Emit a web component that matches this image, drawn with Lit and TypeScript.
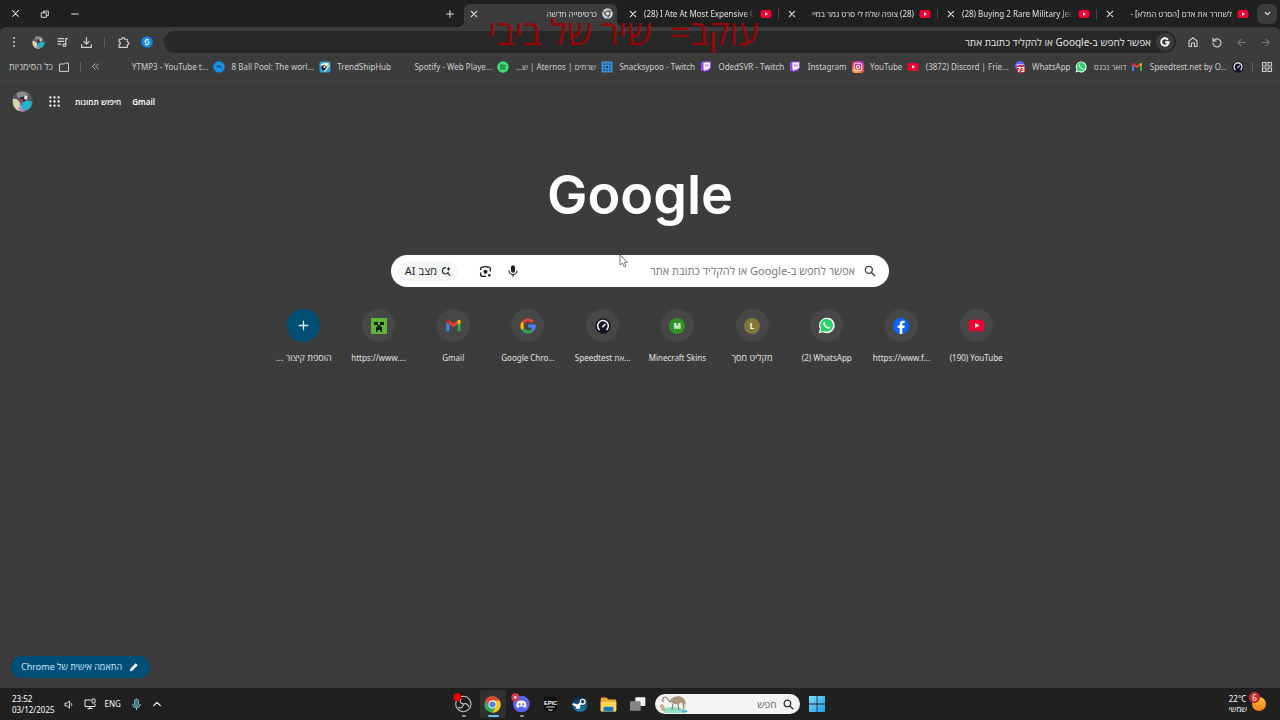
import { LitElement, html, css, svg, TemplateResult } from "lit";
import { customElement } from "lit/decorators.js";
import { classMap } from "lit/directives/class-map.js";

type Glyph = TemplateResult;

const icon = (size: number, viewBox: string, body: Glyph) =>
  html`<svg class="icon" width=${size} height=${size} viewBox=${viewBox} aria-hidden="true">${body}</svg>`;

const line = (size: number, d: string, width = 1.8) =>
  icon(size, "0 0 24 24", svg`<path d=${d} fill="none" stroke="currentColor" stroke-width=${width} stroke-linecap="round" stroke-linejoin="round"/>`);

const closeIcon = () => line(8, "M4 4l16 16M20 4L4 20", 3.5);
const youtube = (size = 12) => icon(size, "0 0 24 24", svg`
  <rect x="1" y="4" width="22" height="16" rx="4.500" fill="#f00033"/><path d="M10 8.500v7l6-3.500z" fill="#fff"/>`);
const twitch = () => icon(12, "0 0 24 24", svg`
  <path d="M5 1h17v13l-6 6h-4l-4 4v-4H2V5z" fill="#9146ff"/><path d="M7 3h13v10l-4 4h-4l-3 3v-3H7z" fill="#fff"/>
  <path d="M11.500 6.500v5M16 6.500v5" stroke="#9146ff" stroke-width="2"/>`);
const gmail = (size: number) => icon(size, "0 0 24 24", svg`
  <path d="M2 20V6l4 3v11z" fill="#4285f4"/><path d="M18 20V9l4-3v14z" fill="#34a853"/>
  <path d="M2 6.500C2 3.500 4.500 3.500 6 4.700L12 9.500l6-4.800v5L12 14.500 6 9.800 2 7z" fill="#ea4335"/>
  <path d="M18 4.700c2-1.500 4-.7 4 1.800V8l-4 3z" fill="#fbbc04"/><path d="M2 6.500C2 4 4 3.500 6 4.700V10L2 7.500z" fill="#c5221f"/>`);
const whatsapp = (size: number) => icon(size, "0 0 24 24", svg`
  <path d="M1 23l1.700-6A11 11 0 1 1 7 21.500z" fill="#fff"/><path d="M3.300 20.700l1.200-4.300a9 9 0 1 1 3.300 3.200z" fill="#25d366"/>
  <path d="M8.300 7c-2 2-.5 5 1.700 7.200s5.500 3.700 7 1.500c.7-1-.2-1.400-2.300-2.400-1 .8-1.200 1.600-3-.1s-1.700-2.200-.8-3.200C10.300 8 9.800 6 8.300 7z" fill="#fff"/>`);
const speedtest = (size: number) => icon(size, "0 0 24 24", svg`
  <circle cx="12" cy="12" r="11.500" fill="#141526"/>
  <path d="M7 18a8 8 0 1 1 10 0" fill="none" stroke="#fff" stroke-width="2.200"/><path d="M11 14l4.500-5" stroke="#fff" stroke-width="2.200"/>`);
const googleG = (size: number) => icon(size, "0 0 24 24", svg`
  <g fill="none" stroke-width="4.400"><path d="M19.300 6.200A9.300 9.300 0 0 0 4 7.500" stroke="#ea4335"/>
  <path d="M4.200 7.200a9.300 9.300 0 0 0 0 9.600" stroke="#fbbc05"/><path d="M4 16.500a9.300 9.300 0 0 0 14.300 2.300" stroke="#34a853"/>
  <path d="M12.300 12h9c0 3-1.200 5.300-3.200 7" stroke="#4285f4"/></g>`);
const chrome = (size: number) => icon(size, "0 0 24 24", svg`
  <circle cx="12" cy="12" r="11.500" fill="#34a853"/>
  <path d="M2 6.200A11.500 11.500 0 0 1 22 6.300H12z" fill="#ea4335"/><path d="M2 6.200L7.400 15 12 6.300z" fill="#ea4335"/>
  <path d="M22 6.300A11.500 11.500 0 0 1 11.800 23.500L17 14.800 12 6.300z" fill="#fbc116"/>
  <circle cx="12" cy="12" r="5.700" fill="#fff"/><circle cx="12" cy="12" r="4.400" fill="#4285f4"/>`);
const chromeMono = () => icon(11, "0 0 24 24", svg`
  <circle cx="12" cy="12" r="11.500" fill="#d0d2d1"/>
  <circle cx="12" cy="12" r="5.500" fill="none" stroke="#3c3c3c" stroke-width="2"/>
  <path d="M12 6.500h10M7.500 15L2.500 6.500M16.500 15L12 23" stroke="#3c3c3c" stroke-width="1.800"/>`);
const spotify = () => icon(12, "0 0 24 24", svg`
  <circle cx="12" cy="12" r="11.500" fill="#3be477"/>
  <path d="M6 8.700c4-1.200 8.500-.8 12 1M6.500 12.400c3.500-1 7-.6 10 1M7 16c3-.8 5.500-.5 8 .8" fill="none" stroke="#1b4a2c" stroke-width="1.900" stroke-linecap="round"/>`);
const instagram = () => html`<span class="insta">${icon(10, "0 0 24 24", svg`
  <g fill="none" stroke="#fff" stroke-width="2.400"><rect x="3" y="3" width="18" height="18" rx="5"/><circle cx="12" cy="12" r="4"/></g>`)}</span>`;
const discordFace = svg`<path d="M6.500 8c3.500-1.700 7.500-1.700 11 0 1.500 2.500 2.200 5 2 8-1.200.9-2.400 1.300-3.600 1.500l-1-1.600h-5.800l-1 1.600c-1.200-.2-2.400-.6-3.600-1.500-.2-3 .5-5.500 2-8z" fill="#fff"/>
  <circle cx="9.300" cy="12.600" r="1.600" fill="#5865f2"/><circle cx="14.700" cy="12.600" r="1.600" fill="#5865f2"/>`;
const discordBadge = () => icon(12, "0 0 24 24", svg`
  <circle cx="12" cy="10" r="10" fill="#5865f2"/><path d="M5 6h14v3H5z" fill="#b9c0ff"/><circle cx="14" cy="16" r="8.500" fill="#d8303a"/>
  <text x="14" y="21" text-anchor="middle" font-size="13" font-weight="700" fill="#fff" font-family="Open Sans, sans-serif">73</text>`);
const aternos = () => icon(12, "0 0 24 24", svg`
  <rect x="1" y="1" width="22" height="22" fill="#3d8fd1"/>
  <path d="M5 5h3v3H5zM16 5h3v3h-3zM5 16h3v3H5zM16 16h3v3h-3zM10 10h4v4h-4zM11 4h2v3h-2zM11 17h2v3h-2zM4 11h3v2H4zM17 11h3v2h-3z" fill="#123a63"/>`);
const pool = () => icon(12, "0 0 24 24", svg`
  <rect x="1" y="1" width="22" height="22" rx="4" fill="#2ea3d8"/><path d="M2 9c4-6 12-7 18-4l-3 5z" fill="#f4f1df"/>
  <circle cx="10" cy="13.500" r="5" fill="#161b22"/><circle cx="11" cy="12" r="2.200" fill="#fff"/><path d="M11 21L21 8" stroke="#f0d9a4" stroke-width="3"/>`);
const ytmp3 = () => icon(12, "0 0 24 24", svg`
  <circle cx="12" cy="12" r="11.500" fill="#1790e6"/><path d="M8 12c2-3 4-2 5-1l3 2" fill="none" stroke="#0c2f4e" stroke-width="2.200"/>`);
const shazam = () => icon(12, "0 0 24 24", svg`
  <circle cx="12" cy="12" r="11.500" fill="#1287f0"/>
  <path d="M14.500 7.500c-2-1.500-3.500-.8-5 .8-2.300 2.200-1.500 4 .5 5.500M9.500 16.500c2 1.500 3.500.8 5-.8 2.300-2.200 1.500-4-.5-5.500" fill="none" stroke="#fff" stroke-width="2.300" stroke-linecap="round"/>`);
const avatar = (size: number) => icon(size, "0 0 24 24", svg`
  <circle cx="12" cy="12" r="12" fill="#55585b"/><path d="M5 3c4-4 11-3 14 1l-3 5-9-1z" fill="#85898c"/>
  <path d="M1 9c3-1 6 1 8 4l2 10C5 23 0 18 1 9z" fill="#d9d2ae"/><path d="M7 20l4-4 4 7c-3 1-6 1-8-3z" fill="#b28cc4"/>
  <path d="M11 13c4-3 9-3 12 0-1 5-4 9-8 9-3-1-5-4-4-9z" fill="#21b3c9"/><path d="M9 7l6-1 1 5-5 2z" fill="#2b2b31"/>
  <path d="M14 5l4 1-1 4-3-1z" fill="#e7e4e4"/><path d="M10 9l3 1-1 4-2-1z" fill="#c03350"/>`);
const searchIcon = (size: number, width = 2.4) => line(size, "M10 4a6 6 0 1 0 0 12 6 6 0 0 0 0-12zM14.500 14.500L20 20", width);
const creeper = () => icon(16, "0 0 16 16", svg`
  <rect width="16" height="16" fill="#5fb53a"/><path d="M3 4h4v3H3zM9 4h4v3H9zM6.500 7h3v2h1.500v5H9.500v-2h-3v2H5V9h1.500z" fill="#111d0c"/>`);
const facebook = () => icon(16, "0 0 24 24", svg`
  <circle cx="12" cy="12" r="12" fill="#0866ff"/>
  <path d="M10 24v-9H7v-3.700h3V9c0-3.300 2-5 5-5l2.500.2v3.300H16c-1.500 0-2 .8-2 2v1.800h3.500L17 15h-3v9z" fill="#fff"/>`);
const letter = (ch: string, kind: string) => html`<span class="letter ${kind}">${ch}</span>`;

interface Tab { title: string; rtl: boolean; active?: boolean; }
const TABS: Tab[] = [
  { title: "לשחרר את אדם [הסרט המלא] -", rtl: true },
  { title: "(28) Buying 2 Rare Military Jeep", rtl: false },
  { title: "(28) צופה שלח לי סרט גמר במיי", rtl: true },
  { title: "(28) I Ate At Most Expensive Gr", rtl: false },
  { title: "כרטיסייה חדשה", rtl: true, active: true },
];

interface Bookmark { label: string; glyph: () => unknown; rtl?: boolean; }
const BOOKMARKS: Bookmark[] = [
  { label: "Speedtest.net by O...", glyph: () => speedtest(12) },
  { label: "דואר נכנס", glyph: () => gmail(12), rtl: true },
  { label: "WhatsApp", glyph: () => whatsapp(12) },
  { label: "(3872) Discord | Frie...", glyph: discordBadge },
  { label: "YouTube", glyph: () => youtube(12) },
  { label: "Instagram", glyph: instagram },
  { label: "OdedSVR - Twitch", glyph: twitch },
  { label: "Snacksypoo - Twitch", glyph: twitch },
  { label: "שרתים | Aternos | ש...", glyph: aternos, rtl: true },
  { label: "Spotify - Web Playe...", glyph: spotify },
  { label: "TrendShipHub", glyph: () => html`<span class="blank"></span>` },
  { label: "8 Ball Pool: The worl...", glyph: pool },
  { label: "YTMP3 - YouTube t...", glyph: ytmp3 },
];

interface Tile { label: string; glyph: () => unknown; rtl?: boolean; }
const TILES: Tile[] = [
  { label: "(190) YouTube", glyph: () => youtube(17) },
  { label: "https://www.f...", glyph: facebook },
  { label: "(2) WhatsApp", glyph: () => whatsapp(17) },
  { label: "מקליט מסך", glyph: () => letter("L", "olive"), rtl: true },
  { label: "Minecraft Skins", glyph: () => letter("M", "green") },
  { label: "Speedtest את...", glyph: () => speedtest(16) },
  { label: "Google Chro...", glyph: () => googleG(16) },
  { label: "Gmail", glyph: () => gmail(17) },
  { label: "https://www....", glyph: creeper },
];

@customElement("app-root")
export class AppRoot extends LitElement {
  static styles = css`
    :host {
      display: flex; flex-direction: column; position: relative;
      min-height: 100vh; overflow: hidden; direction: rtl;
      background: #3c3c3c; color: #e3e3e3;
      font: 8px/12px "Noto Sans", "Open Sans", "DejaVu Sans", sans-serif;
    }
    * { box-sizing: border-box; }
    button, input { font: inherit; color: inherit; background: none; border: 0; padding: 0; margin: 0; outline: 0; }
    button { display: grid; place-items: center; }
    a { color: inherit; text-decoration: none; }
    .icon { display: block; flex: none; overflow: visible; }
    .ltr { direction: ltr; }
    .rtl { direction: rtl; }

    .strip { display: flex; align-items: center; height: 27px; background: #1f2020; padding-right: 3px; }
    .menu { width: 20px; height: 20px; border-radius: 6px; background: #3a3b3b; margin-left: 4px; }
    .tabs { display: flex; gap: 6px; align-self: stretch; padding-top: 4px; }
    .tab { position: relative; display: flex; align-items: center; gap: 5px; width: 153px; padding: 0 4px 4px; }
    .tab:not(.active)::after { content: ""; position: absolute; left: -4px; top: 5px; width: 1px; height: 10px; background: #46484a; }
    .tab:nth-last-child(2)::after { display: none; }
    .tab.active { background: #3c3c3c; border-radius: 6px 6px 0 0; }
    .tab.active::before, .tab.active::after {
      content: ""; position: absolute; bottom: 0; width: 6px; height: 6px;
    }
    .tab.active::before { right: -6px; background: radial-gradient(circle at 100% 0, transparent 6px, #3c3c3c 6px); }
    .tab.active::after { left: -6px; background: radial-gradient(circle at 0 0, transparent 6px, #3c3c3c 6px); }
    .title { flex: 1; overflow: hidden; white-space: nowrap; }
    .title.ltr { mask-image: linear-gradient(to left, transparent, #000 12px); }
    .title.rtl { mask-image: linear-gradient(to right, transparent, #000 12px); }
    .close { width: 12px; height: 12px; }
    .new { width: 20px; height: 20px; margin-right: 4px; }
    .controls { display: flex; margin-right: auto; }
    .controls button { width: 30px; height: 27px; }

    .frame { background: #1f2020; }
    .toolbar { display: flex; align-items: center; padding: 4px 3px 2px 2px; background: #3c3c3c; border-radius: 6px 6px 0 0; }
    .toolbar button { width: 24px; height: 22px; color: #d0d0d0; }
    .toolbar .off { color: #7c7c7c; }
    .omni { flex: 1; display: flex; align-items: center; gap: 5px; height: 22px; margin: 0 5px; padding-right: 2px; border-radius: 11px; background: #282828; }
    .omni input { flex: 1; min-width: 0; font-size: 10px; }
    .omni input::placeholder { color: #e6e6e6; opacity: 1; }
    .g { display: grid; place-items: center; width: 18px; height: 18px; border-radius: 50%; background: #3c3c3c; color: #fff; }
    .rule { width: 1px; height: 10px; margin: 0 6px; background: #5d5f61; }

    .marks { display: flex; align-items: center; height: 27px; padding: 0 7px 3px 9px; border-bottom: 1px solid #454545; color: #cfcfcf; }
    .list { flex: 1; display: flex; justify-content: space-between; align-items: center; padding: 0 4px 0 32px; min-width: 0; }
    .list a, .all { display: flex; align-items: center; gap: 5px; white-space: nowrap; }
    .all { margin-right: 4px; font-size: 9px; }
    .more { margin-left: 4px; }
    .apps-rule { margin-right: 8px; }
    .blank { width: 12px; height: 12px; }
    .insta { display: grid; place-items: center; width: 12px; height: 12px; border-radius: 3px; background: linear-gradient(20deg, #ffc03a, #f5384f 45%, #b02fd0); }

    main { flex: 1; display: flex; flex-direction: column; align-items: center; }
    .links { display: flex; align-self: stretch; justify-content: flex-end; align-items: center; gap: 11px; height: 39px; padding-left: 12px; color: #fff; font-weight: 600; }
    .links .apps { width: 20px; height: 20px; }
    .logo { direction: ltr; margin: 38px 0 0; height: 96px; font: 600 54px/72px Inter, sans-serif; color: #fff; }
    .search { display: flex; align-items: center; width: 38%; min-width: 498px; height: 32px; padding: 0 12px 0 7px; border-radius: 16px; background: #fff; color: #474747; }
    .search input { flex: 1; min-width: 0; margin: 0 8px; font-size: 11px; line-height: 16px; }
    .search input::placeholder { color: #757575; opacity: 1; }
    .search button { width: 27px; height: 20px; color: #1f1f1f; }
    .search .ai { display: flex; justify-content: center; align-items: center; gap: 4px; width: 60px; margin-right: 14px; border-radius: 10px; background: #f5f6f6; font-size: 11px; }
    .tiles { display: grid; grid-template-columns: repeat(10, 1fr); width: 58%; min-width: 747px; margin: 22px 0 0; padding: 0; list-style: none; }
    .tiles a, .tiles button { display: grid; justify-items: center; gap: 9px; width: 100%; line-height: 13px; white-space: nowrap; }
    .tiles .rtl { font-size: 9px; }
    .disc { display: grid; place-items: center; width: 33px; height: 33px; border-radius: 50%; background: #474747; }
    .add { background: #004f77; color: #d7ecfa; }
    .letter { width: 16px; height: 16px; border-radius: 50%; color: #fff; font-weight: 700; line-height: 16px; text-align: center; }
    .green { background: #2f9423; }
    .olive { background: #7d7838; }
    .custom { display: flex; align-items: center; gap: 7px; align-self: flex-end; height: 22px; margin: auto 0 10px 11px; padding: 0 11px 0 10px; border-radius: 11px; background: #004f77; color: #c9e8fb; font-size: 9px; }

    footer { display: grid; grid-template-columns: 1fr auto 1fr; align-items: center; height: 32px; background: #202020; color: #fff; }
    .weather { display: flex; align-items: center; gap: 4px; padding-right: 13px; text-align: left; line-height: 10px; }
    .sun { position: relative; width: 16px; height: 18px; }
    .sun .badge { position: absolute; right: 7px; top: -3px; width: 11px; height: 11px; border-radius: 50%; background: #c42b2b; text-align: center; line-height: 11px; }
    .dock { display: flex; align-items: center; gap: 3px; }
    .dock button { position: relative; width: 26px; height: 28px; border-radius: 3px; }
    .dock .on { background: #303030; }
    .dock .run::after { content: ""; position: absolute; bottom: 1px; left: 11px; width: 4px; height: 2px; border-radius: 1px; background: #9a9a9a; }
    .dock .on::after { left: 8px; width: 11px; background: #5fc3f2; }
    .find { display: flex; align-items: center; gap: 5px; width: 145px; height: 20px; margin: 0 1px; padding: 0 5px 0 4px; border-radius: 10px; background: #f3f3f3; color: #2b2b2b; }
    .find input { flex: 1; min-width: 0; font-size: 10px; }
    .find input::placeholder { color: #6b6b6b; opacity: 1; }
    .tray { display: flex; justify-content: flex-end; align-items: center; gap: 9px; padding-left: 12px; }
    .tray time { direction: ltr; text-align: left; line-height: 11px; }

    .caption { position: absolute; top: 12px; left: 488px; margin: 0; font: 500 35px/40px "Open Sans", sans-serif; color: #980509; white-space: pre; pointer-events: none; }
    .pointer { position: absolute; left: 619px; top: 254px; pointer-events: none; }
  `;

  private tab(t: Tab) {
    return html`<div class=${classMap({ tab: true, active: !!t.active })} role="tab" aria-selected=${t.active ? "true" : "false"}>
      ${t.active ? chromeMono() : youtube()}
      <span class="title ${t.rtl ? "rtl" : "ltr"}">${t.title}</span>
      <button class="close" aria-label="סגירה">${closeIcon()}</button>
    </div>`;
  }

  render() {
    return html`
      <div class="strip">
        <button class="menu" aria-label="חיפוש כרטיסיות">${line(9, "M6 9l6 6 6-6", 3.5)}</button>
        <div class="tabs" role="tablist">${TABS.map((t) => this.tab(t))}</div>
        <button class="new" aria-label="כרטיסייה חדשה">${line(10, "M12 4v16M4 12h16", 2.4)}</button>
        <div class="controls">
          <button aria-label="מזעור">${line(10, "M4 12h16", 2.4)}</button>
          <button aria-label="שחזור">${line(10, "M4 9h11v11H4zM8 9V5h12v11h-4", 2.2)}</button>
          <button aria-label="סגירת החלון">${line(9, "M4 4l16 16M20 4L4 20", 2.8)}</button>
        </div>
      </div>

      <div class="frame"><div class="toolbar">
        <button class="off" aria-label="קדימה">${line(11, "M4 12h16M13 5l7 7-7 7", 2.2)}</button>
        <button class="off" aria-label="אחורה">${line(11, "M20 12H4M11 5l-7 7 7 7", 2.2)}</button>
        <button aria-label="טעינה מחדש">${line(12, "M4 4v6h6M5 10a8 8 0 1 1-1 4", 2.4)}</button>
        <button aria-label="דף הבית">${line(12, "M4 21V10l8-6.500L20 10v11h-5v-7H9v7z", 2.2)}</button>
        <div class="omni">
          <span class="g">${icon(10, "0 0 24 24", svg`<path d="M19 6.500A9 9 0 1 0 20.800 12.500H12.500" fill="none" stroke="currentColor" stroke-width="4.500"/>`)}</span>
          <input aria-label="שורת הכתובות" placeholder="אפשר לחפש ב-Google או להקליד כתובת אתר">
        </div>
        <button aria-label="Shazam">${shazam()}</button>
        <button aria-label="תוספים">${line(13, "M4 6h5c-.5-4 5.500-4 5 0h5v5c4-.5 4 5.500 0 5v5H4v-5c3 0 3-5 0-5z", 2.2)}</button>
        <span class="rule"></span>
        <button aria-label="הורדות">${line(13, "M12 3v11M7 10l5 5 5-5M3 16v5h18v-5", 2.2)}</button>
        <button aria-label="מדיה">${icon(13, "0 0 24 24", svg`<path d="M3 5h12M3 10h12M3 15h7" stroke="currentColor" stroke-width="2.200"/><circle cx="15.500" cy="17" r="2.500" fill="none" stroke="currentColor" stroke-width="2"/><path d="M18 17V5h4" fill="none" stroke="currentColor" stroke-width="2.200"/>`)}</button>
        <button aria-label="פרופיל">${avatar(13)}</button>
        <button aria-label="תפריט">${icon(12, "0 0 24 24", svg`<g fill="currentColor"><circle cx="12" cy="4" r="2"/><circle cx="12" cy="12" r="2"/><circle cx="12" cy="20" r="2"/></g>`)}</button>
      </div></div>

      <nav class="marks">
        ${icon(12, "0 0 24 24", svg`<path d="M3 3h7v7H3zM14 3h7v7h-7zM3 14h7v7H3zM14 14h7v7h-7z" fill="none" stroke="currentColor" stroke-width="2.200"/>`)}
        <span class="rule more apps-rule"></span>
        <div class="list">
          ${BOOKMARKS.map((b) => html`<a href="#">${b.glyph()}<span class=${b.rtl ? "rtl" : "ltr"}>${b.label}</span></a>`)}
        </div>
        <button class="more" aria-label="סימניות נוספות">${line(9, "M11 5l-7 7 7 7M20 5l-7 7 7 7", 2.2)}</button>
        <span class="rule"></span>
        <a class="all" href="#">${line(12, "M3 20V6h10l2-2h6v16z", 2)}<span>כל הסימניות</span></a>
      </nav>

      <main>
        <div class="links">
          <a class="ltr" href="#">Gmail</a>
          <a href="#">חיפוש תמונות</a>
          <button class="apps" aria-label="אפליקציות">${icon(11, "0 0 24 24", svg`<g fill="currentColor">${[3, 12, 21].map((x) => [3, 12, 21].map((y) => svg`<circle cx=${x} cy=${y} r="2.500"/>`))}</g>`)}</button>
          ${avatar(21)}
        </div>
        <h1 class="logo">Google</h1>
        <form class="search" role="search">
          ${searchIcon(14)}
          <input aria-label="חיפוש" placeholder="אפשר לחפש ב-Google או להקליד כתובת אתר">
          <button type="button" aria-label="חיפוש קולי">${icon(14, "0 0 24 24", svg`<rect x="8.500" y="2" width="7" height="13" rx="3.500" fill="currentColor"/><path d="M5 11a7 7 0 0 0 14 0M12 18v4" fill="none" stroke="currentColor" stroke-width="2"/>`)}</button>
          <button type="button" aria-label="חיפוש לפי תמונה">${icon(13, "0 0 24 24", svg`<path d="M3 9V7a3 3 0 0 1 3-3h2M16 4h2a3 3 0 0 1 3 3v5M3 14v3a4 4 0 0 0 4 4h6M8 4.500L9.500 3h5L16 4.500" fill="none" stroke="currentColor" stroke-width="2.500"/><circle cx="12" cy="12.500" r="3.700" fill="currentColor"/><circle cx="19" cy="19" r="2.300" fill="currentColor"/>`)}</button>
          <button type="button" class="ai">${icon(10, "0 0 24 24", svg`<path d="M12 4A7.500 7.500 0 1 0 18 14M15 16l7 7" fill="none" stroke="currentColor" stroke-width="2.600"/><path d="M18 1l1.500 4.500L24 7l-4.500 1.500L18 13l-1.500-4.500L12 7l4.500-1.500z" fill="currentColor"/>`)}<span>מצב AI</span></button>
        </form>
        <ul class="tiles">
          ${TILES.map((t) => html`<li><a href="#"><span class="disc">${t.glyph()}</span><span class=${t.rtl ? "rtl" : "ltr"}>${t.label}</span></a></li>`)}
          <li><button><span class="disc add">${line(13, "M12 4v16M4 12h16", 2.4)}</span><span class="rtl">הוספת קיצור ...</span></button></li>
        </ul>
        <button class="custom">${icon(10, "0 0 24 24", svg`<path d="M2 22l1-6L16 3l5 5L8 21z" fill="#fff"/>`)}<span>התאמה אישית של Chrome</span></button>
      </main>

      <footer>
        <div class="weather">
          <span class="sun">${icon(16, "0 -1 16 16", svg`<defs><linearGradient id="s" x2="0" y2="1"><stop stop-color="#ffc02e"/><stop offset="1" stop-color="#f27a1a"/></linearGradient></defs><circle cx="8" cy="8" r="7" fill="url(#s)"/>`)}<span class="badge">6</span></span>
          <div><div class="ltr">22°C</div><div>שמשי</div></div>
        </div>
        <div class="dock">
          <button aria-label="התחל">${icon(16, "0 0 16 16", svg`<defs><linearGradient id="w" x2="1" y2="1"><stop stop-color="#7fe0fb"/><stop offset="1" stop-color="#1a9be8"/></linearGradient></defs><path d="M0 0h7.600v7.600H0zM8.400 0H16v7.600H8.400zM0 8.400h7.600V16H0zM8.400 8.400H16V16H8.400z" fill="url(#w)"/>`)}</button>
          <label class="find">
            ${searchIcon(13)}
            <input aria-label="חפש" placeholder="חפש">
            <svg class="icon" width="30" height="18" viewBox="0 0 30 18" aria-hidden="true">
              <path d="M2 14c6-3 18-3 27 2l-4 2H6z" fill="#8fe0c4"/><path d="M22 15l7 1-4 2z" fill="#5aa9d6"/>
              <path d="M11 5c3-4 10-5 13-2 3 2 3 6 2 8-1-4-4-4-6-2-4 1-8 0-9-4z" fill="#a8947f"/>
              <path d="M12 7C9 7 9 2 6 2 3 2 4 5 4 7M14 9l-1 6M19 9l1 6M24 8l1 6" fill="none" stroke="#8f7c68" stroke-width="1.200"/>
              <path d="M1 11c1-3 3-2 4 0l1 5H3z" fill="#d3ab8e"/>
            </svg>
          </label>
          <button aria-label="תצוגת משימות">${icon(16, "0 0 24 24", svg`<rect x="8" y="2" width="15" height="13" rx="1" fill="#f1f1f1"/><rect x="0" y="8" width="16" height="14" rx="1" fill="#858585"/>`)}</button>
          <button aria-label="סייר הקבצים">${icon(17, "0 0 24 24", svg`<path d="M1 4a2 2 0 0 1 2-2h6l3 3h9a2 2 0 0 1 2 2v13a2 2 0 0 1-2 2H3a2 2 0 0 1-2-2z" fill="#e9a82a"/><path d="M1 8h22v12a2 2 0 0 1-2 2H3a2 2 0 0 1-2-2z" fill="#ffd65c"/><path d="M5 22v-5a2 2 0 0 1 2-2h10a2 2 0 0 1 2 2v5z" fill="#1978c0"/>`)}</button>
          <button aria-label="Steam">${icon(16, "0 0 24 24", svg`<defs><linearGradient id="st" x2="0" y2="1"><stop stop-color="#101d3c"/><stop offset="1" stop-color="#1387b8"/></linearGradient></defs><circle cx="12" cy="12" r="11.500" fill="url(#st)"/><path d="M1 12l8 3 5-5" fill="none" stroke="#fff" stroke-width="3.500"/><circle cx="16" cy="8.500" r="4.500" fill="#fff"/><circle cx="16" cy="8.500" r="2.700" fill="#2a4468"/><circle cx="9" cy="16" r="3.500" fill="#fff"/>`)}</button>
          <button aria-label="Epic Games">${icon(17, "0 0 24 24", svg`<path d="M3 1h18v18l-9 4-9-4z" fill="#0c0c0c"/><text x="12" y="12" text-anchor="middle" font-size="8" font-weight="700" fill="#fff" font-family="Liberation Sans, sans-serif">EPIC</text><path d="M6 15.500h12M9 19l3 1.500 3-1.500" fill="none" stroke="#ddd" stroke-width="1.500"/>`)}</button>
          <button class="run" aria-label="Discord">${icon(20, "2 1 30 30", svg`<circle cx="16" cy="16" r="12.500" fill="#5865f2"/><g transform="translate(4 4)">${discordFace}</g><circle cx="7" cy="6" r="6" fill="#d83b44"/><circle cx="7" cy="6" r="2" fill="#fff"/>`)}</button>
          <button class="on run" aria-label="Chrome">${chrome(17)}</button>
          <button class="run" aria-label="OBS">${icon(20, "2 1 30 30", svg`<circle cx="16" cy="16" r="11.500" fill="#1b1b1f" stroke="#c9c9c9" stroke-width="1.600"/><path d="M16 16c-5-1-6-5-3-8M16 16c5-2 8 1 8 5M16 16c0 5-4 7-8 5" fill="none" stroke="#c9c9c9" stroke-width="1.800"/><circle cx="7" cy="6" r="6" fill="#e60000"/>`)}</button>
        </div>
        <div class="tray">
          ${line(10, "M4 16l8-8 8 8", 2.8)}
          ${icon(13, "0 0 24 24", svg`<rect x="8.500" y="2" width="7" height="13" rx="3.500" fill="#2d6f74" stroke="#8fd6da" stroke-width="1.500"/><path d="M5 11a7 7 0 0 0 14 0M12 18v4" fill="none" stroke="#8fd6da" stroke-width="1.800"/>`)}
          <span class="ltr">ENG</span>
          ${icon(12, "0 0 24 24", svg`<path d="M14 4H2v13h20v-5M7 21h10M12 17v4" fill="none" stroke="#fff" stroke-width="1.800"/><rect x="16" y="2" width="6" height="8" rx="1" fill="none" stroke="#fff" stroke-width="1.800"/>`)}
          ${line(11, "M3 9h4l5-5v16l-5-5H3zM16 9c1.500 2 1.500 4 0 6", 1.8)}
          <time datetime="2025-12-03T23:52">23:52<br>03/12/2025</time>
        </div>
      </footer>

      <p class="caption">עוקב=  שיר של ביבי</p>
      <svg class="pointer" width="10" height="14" viewBox="0 0 10 14" aria-hidden="true"><path d="M1 1v10l2.500-2 1.800 4 1.700-.8L5.300 8.300H8.500z" fill="#fff" stroke="#555" stroke-width=".8"/></svg>
    `;
  }
}
